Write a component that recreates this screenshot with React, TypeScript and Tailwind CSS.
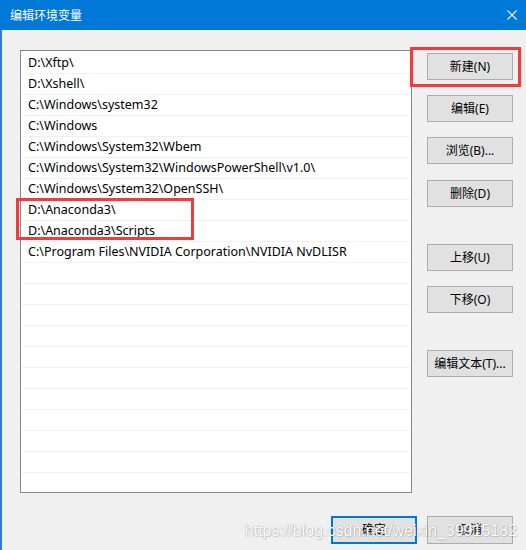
import React from "react";

const paths = [
  "D:\\Xftp\\",
  "D:\\Xshell\\",
  "C:\\Windows\\system32",
  "C:\\Windows",
  "C:\\Windows\\System32\\Wbem",
  "C:\\Windows\\System32\\WindowsPowerShell\\v1.0\\",
  "C:\\Windows\\System32\\OpenSSH\\",
  "D:\\Anaconda3\\",
  "D:\\Anaconda3\\Scripts",
  "C:\\Program Files\\NVIDIA Corporation\\NVIDIA NvDLISR",
];

const rows = [...paths, ...Array(11).fill("")];

function Btn({ label, className = "" }: { label: string; className?: string }) {
  return (
    <button
      className={`flex h-[27px] w-[86px] items-center justify-center border border-[#adadad] bg-[#e1e1e1] text-[12px] text-black ${className}`}
    >
      {label}
    </button>
  );
}

export default function App() {
  return (
    <div className="relative flex h-[550px] w-[526px] flex-col overflow-hidden bg-[#f0f0f0] font-['Noto_Sans','Noto_Sans_CJK_SC',sans-serif] text-[12px] text-black">
      {/* title bar */}
      <div className="flex h-[30px] shrink-0 items-center justify-between bg-[#0078d7] pl-[10px] pr-[9px] text-white">
        <span className="font-['Noto_Sans_CJK_SC',sans-serif] leading-none">编辑环境变量</span>
        <svg width="10" height="10" viewBox="0 0 10 10" className="mt-[-1px]">
          <path d="M0.5 0.5 L9.5 9.5 M9.5 0.5 L0.5 9.5" stroke="white" strokeWidth="1.1" fill="none" />
        </svg>
      </div>

      {/* body */}
      <div className="flex flex-1 border-l-2 border-[#2d7fd3] pl-[18px] pt-[20px]">
        {/* list */}
        <div className="relative h-[443px] w-[392px] shrink-0">
          <div className="h-full w-full overflow-hidden border border-[#828790] bg-white pt-[2px] text-[12.5px]">
            {rows.map((p, i) => (
              <div
                key={i}
                className="mx-[1px] flex h-[21px] items-center border-b border-[#f0f0f0] pl-[6px] pt-[1px] leading-none"
              >
                {p}
              </div>
            ))}
          </div>
          <div className="absolute left-[-4px] top-[148px] h-[42px] w-[178px] border-[3px] border-[#f43b3b]" />
        </div>

        {/* buttons */}
        <div className="ml-[15px] flex flex-col pt-[3px]">
          <div className="relative">
            <Btn label="新建(N)" />
            <div className="absolute left-[-17px] top-[-6px] h-[40px] w-[111px] border-[3px] border-[#f43b3b]" />
          </div>
          <Btn label="编辑(E)" className="mt-[15px]" />
          <Btn label="浏览(B)..." className="mt-[15px]" />
          <Btn label="删除(D)" className="mt-[16px]" />
          <Btn label="上移(U)" className="mt-[37px]" />
          <Btn label="下移(O)" className="mt-[15px]" />
          <Btn label="编辑文本(T)..." className="mt-[37px]" />
        </div>
      </div>

      {/* bottom buttons */}
      <div className="absolute bottom-[6px] right-[13px] flex gap-[10px]">
        <button className="flex h-[28px] w-[86px] items-center justify-center border-2 border-[#0078d7] bg-[#e1e1e1] text-[12px]">
          确定
        </button>
        <button className="flex h-[28px] w-[86px] items-center justify-center border border-[#adadad] bg-[#e1e1e1] text-[12px]">
          取消
        </button>
      </div>

      {/* watermark */}
      <div className="pointer-events-none absolute right-[9px] top-[523px] font-['Liberation_Sans',sans-serif] text-[16px] leading-4 text-white [text-shadow:0_0_1px_rgba(0,0,0,0.4),1px_1px_1px_rgba(0,0,0,0.12)]">
        https://blog.csdn.net/weixin_39915182
      </div>
    </div>
  );
}
